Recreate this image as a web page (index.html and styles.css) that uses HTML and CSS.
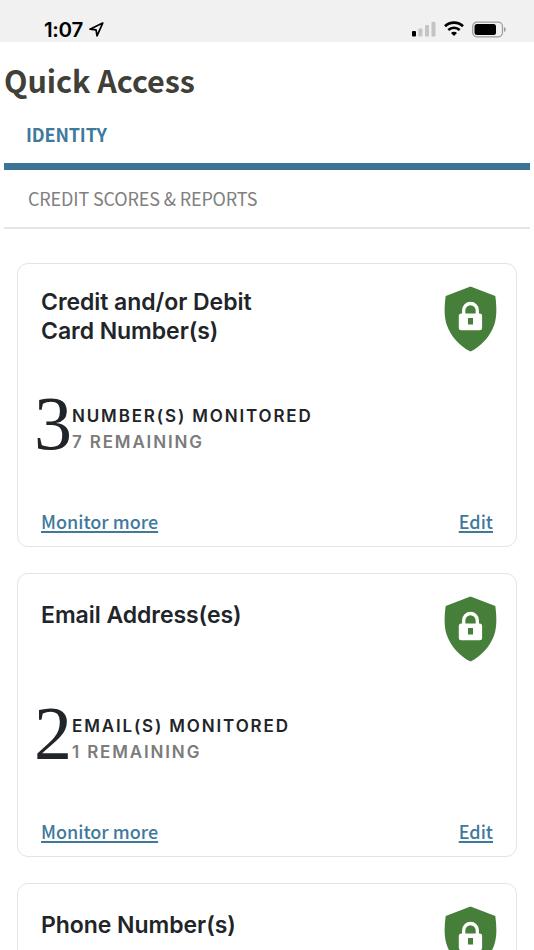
FILE: index.html
```html
<!DOCTYPE html>
<html lang="en">
<head>
  <meta charset="UTF-8">
  <meta name="viewport" content="width=device-width, initial-scale=1.0">
  <title>Quick Access</title>
  <link rel="stylesheet" href="styles.css">
</head>
<body>
  <svg class="sprite" width="0" height="0" aria-hidden="true">
    <symbol id="shield-lock" viewBox="0 0 53 66">
      <path fill="#457f3a" d="M26.5 0.5 L51.3 10 C52.8 21 53 31 50.2 39 C46.5 50 37 60.5 26.5 65.5 C16 60.5 6.500 50 2.800 39 C0 31 0.200 21 1.700 10 Z"/>
      <rect x="14.800" y="27.500" width="23.300" height="16.800" rx="2.500" fill="#fff"/>
      <path fill="none" stroke="#fff" stroke-width="3.300" d="M19.700 28.500 V24.300 A6.800 6.800 0 0 1 33.300 24.300 V28.500"/>
      <rect x="24" y="32" width="5" height="6.500" fill="#457f3a"/>
    </symbol>
  </svg>

  <div class="status-bar">
    <div class="status-left">
      <span class="time">1:07</span>
      <svg width="15" height="15" viewBox="0 0 14 14">
        <path d="M12.800 1 L0.900 6.700 L6.600 7.400 L7.500 12.900 Z" fill="none" stroke="#000" stroke-width="1.600" stroke-linejoin="round"/>
      </svg>
    </div>
    <div class="status-right">
      <svg width="24" height="16" viewBox="0 0 24 16">
        <rect x="0" y="10" width="4" height="5.500" rx="1" fill="#000"/>
        <rect x="6.400" y="7.500" width="4" height="8" rx="1" fill="#c4c4c4"/>
        <rect x="13" y="4" width="4" height="11.500" rx="1" fill="#c4c4c4"/>
        <rect x="19.500" y="0.700" width="4" height="14.800" rx="1" fill="#c4c4c4"/>
      </svg>
      <svg width="20" height="16" viewBox="0 0 20 16">
        <path d="M1 5.300 C6 0.500 14 0.500 19 5.300" fill="none" stroke="#000" stroke-width="2.800"/>
        <path d="M4.300 9 C7.500 6 12.500 6 15.700 9" fill="none" stroke="#000" stroke-width="2.600"/>
        <path d="M7 11.900 C8.700 10.500 11.300 10.500 13 11.900 L10 15 Z" fill="#000"/>
      </svg>
      <svg width="35" height="17" viewBox="0 0 35 17">
        <rect x="0.700" y="1.200" width="29.800" height="14.600" rx="4.200" fill="none" stroke="#9b9b9b" stroke-width="1.200"/>
        <rect x="2.500" y="3" width="21.500" height="11" rx="2.500" fill="#000"/>
        <path d="M32 6 C34.300 6.800 34.300 10.200 32 11 Z" fill="#9b9b9b"/>
      </svg>
    </div>
  </div>

  <div class="page">
    <h1>Quick Access</h1>

    <nav class="tabs">
      <a class="tab tab-active">IDENTITY</a>
      <a class="tab">CREDIT SCORES &amp; REPORTS</a>
    </nav>

    <div class="cards">
      <section class="card">
        <div class="card-header">
          <h2>Credit and/or Debit<br>Card Number(s)</h2>
          <svg class="shield"><use href="#shield-lock"/></svg>
        </div>
        <div class="stat">
          <span class="count">3</span>
          <div class="stat-text">
            <div class="monitored">NUMBER(S) MONITORED</div>
            <div class="remaining">7 REMAINING</div>
          </div>
        </div>
        <div class="links">
          <a>Monitor more</a>
          <a>Edit</a>
        </div>
      </section>

      <section class="card">
        <div class="card-header">
          <h2 class="single">Email Address(es)</h2>
          <svg class="shield"><use href="#shield-lock"/></svg>
        </div>
        <div class="stat">
          <span class="count">2</span>
          <div class="stat-text">
            <div class="monitored">EMAIL(S) MONITORED</div>
            <div class="remaining">1 REMAINING</div>
          </div>
        </div>
        <div class="links">
          <a>Monitor more</a>
          <a>Edit</a>
        </div>
      </section>

      <section class="card">
        <div class="card-header">
          <h2 class="single">Phone Number(s)</h2>
          <svg class="shield"><use href="#shield-lock"/></svg>
        </div>
      </section>
    </div>
  </div>
</body>
</html>
```
FILE: styles.css
```css
* {
  margin: 0;
  padding: 0;
  box-sizing: border-box;
}

body {
  height: 950px;
  overflow: hidden;
  background: #fff;
  color: #212529;
  font-family: Inter, "Liberation Sans", sans-serif;
}

svg {
  display: block;
  flex: none;
}

.sprite {
  height: 0;
}

.status-bar {
  display: flex;
  justify-content: space-between;
  height: 42px;
  padding: 18px 27px 0 44px;
  background: #f1f1f1;
  color: #000;
}

.status-left {
  display: flex;
  gap: 6px;
}

.status-left svg {
  margin-top: 4px;
}

.time {
  font-size: 20.500px;
  font-weight: 600;
  line-height: 24px;
  letter-spacing: -0.300px;
}

.status-right {
  display: flex;
  gap: 8px;
  padding-top: 3px;
}

.page {
  padding: 0 4px;
}

h1 {
  padding-top: 18px;
  height: 73px;
  font-family: "Noto Sans CJK SC", sans-serif;
  font-size: 30.500px;
  font-weight: 700;
  line-height: 40px;
  letter-spacing: -0.050px;
  color: #3f4037;
}

.tab {
  display: block;
  height: 59px;
  padding-left: 24px;
  border-bottom: 2px solid #e4e4ea;
  font-family: "Noto Sans CJK SC", sans-serif;
  font-size: 18px;
  font-weight: 400;
  line-height: 56px;
  letter-spacing: -0.150px;
  color: #808080;
}

.tab-active {
  height: 55px;
  padding-left: 22px;
  border-bottom: 7px solid #3c7496;
  font-weight: 700;
  line-height: 38px;
  color: #3f799b;
}

.cards {
  padding: 34px 13px 0;
}

.card {
  display: flex;
  flex-direction: column;
  height: 284px;
  margin-bottom: 26px;
  padding: 22px 19px 0 23px;
  border: 1.500px solid #e4e4e4;
  border-radius: 11px;
}

.card-header {
  display: flex;
  justify-content: space-between;
  height: 107px;
}

h2 {
  padding-top: 2px;
  font-size: 23px;
  font-weight: 600;
  line-height: 28.500px;
  letter-spacing: -0.050px;
}

.single {
  padding-top: 5px;
}

.shield {
  width: 53px;
  height: 66px;
}

.stat {
  display: flex;
  height: 114px;
  margin-left: -7px;
}

.count {
  width: 38px;
  font-family: "Liberation Serif", serif;
  font-size: 76px;
  line-height: 60px;
}

.stat-text {
  padding-top: 11px;
  font-size: 17px;
  font-weight: 600;
  line-height: 25.500px;
  letter-spacing: 1.850px;
  white-space: nowrap;
}

.remaining {
  color: #7b7b7b;
}

.links {
  display: flex;
  justify-content: space-between;
  padding-right: 4px;
  font-family: "Noto Sans CJK SC", sans-serif;
  font-size: 18px;
  font-weight: 500;
  line-height: 28px;
  color: #3f799b;
}

.links a {
  text-decoration: underline;
  text-decoration-thickness: 1.500px;
  text-underline-offset: 2px;
}
```
